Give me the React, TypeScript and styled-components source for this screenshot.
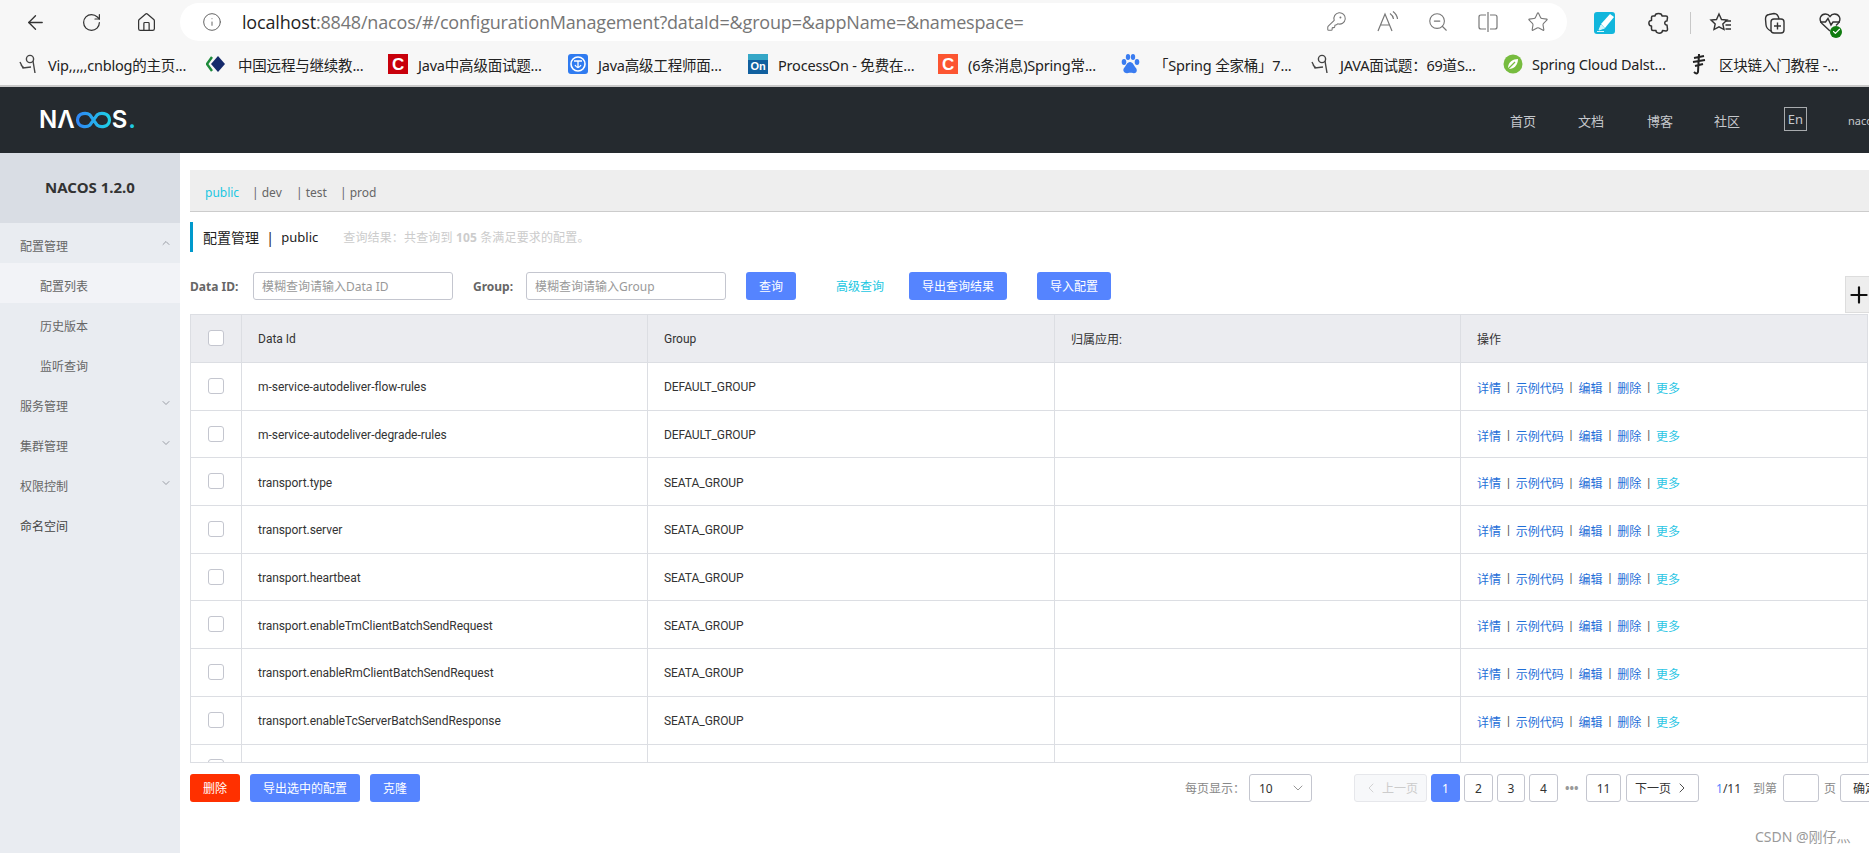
import styled, { createGlobalStyle } from "styled-components"
import {
  ArrowLeft,
  Check as CheckMark,
  ChevronDown,
  ChevronLeft,
  ChevronRight,
  ChevronUp,
  Home,
  Info,
  KeyRound,
  Plus,
  RotateCw,
  Star,
  ZoomOut,
} from "lucide-react"

const Global = createGlobalStyle`
  html, body {
    margin: 0;
    padding: 0;
    background: #fff;
  }
  * {
    box-sizing: border-box;
  }
`

const FONT = `"Noto Sans", "Noto Sans CJK SC", sans-serif`
const TABLE_FONT = `Roboto, "Noto Sans CJK SC", sans-serif`

const Page = styled.div`
  position: relative;
  width: 1869px;
  height: 853px;
  overflow: hidden;
  display: flex;
  flex-direction: column;
  font-family: ${FONT};
  font-size: 12px;
  color: #333;
`

/* browser chrome */
const Toolbar = styled.div`
  height: 44px;
  background: #f7f7f7;
  display: flex;
  align-items: center;
  padding-top: 1px;
`

const NavIcons = styled.div`
  width: 180px;
  padding-left: 24px;
  display: flex;
  align-items: center;
  gap: 34px;
  color: #333;
`

const AddressBar = styled.div`
  width: 1387px;
  height: 38px;
  margin-top: -2px;
  background: #fff;
  border-radius: 19px;
  display: flex;
  align-items: center;
  padding-left: 22px;
`

const Url = styled.div`
  margin-left: 20px;
  width: 880px;
  font-family: "Open Sans", sans-serif;
  font-size: 18px;
  letter-spacing: -0.17px;
  color: #767676;
  white-space: nowrap;
  b {
    font-weight: 400;
    color: #1f1f1f;
  }
`

const BarIcons = styled.div`
  margin-left: 204px;
  display: flex;
  align-items: center;
  gap: 28px;
  color: #777;
`

const ExtIcons = styled.div`
  margin-left: 13px;
  display: flex;
  align-items: center;
  color: #333;
`

const ExtSlot = styled.div<{ $w: number }>`
  position: relative;
  width: ${(p) => p.$w}px;
  display: flex;
  align-items: center;
  justify-content: center;
`

const Divider = styled.div`
  width: 1px;
  height: 22px;
  background: #c8c8c8;
`

const ExtBadge = styled.span`
  position: absolute;
  left: 31px;
  bottom: -3px;
  width: 12px;
  height: 12px;
  border-radius: 50%;
  background: #107c10;
  color: #fff;
  display: flex;
  align-items: center;
  justify-content: center;
`

const Bookmarks = styled.div`
  height: 43px;
  background: #f7f7f7;
  border-bottom: 2px solid #c9c9c9;
  display: flex;
  align-items: center;
  padding-left: 19px;
  padding-bottom: 1px;
`

const Bookmark = styled.div<{ $w: number; $gap: number }>`
  width: ${(p) => p.$w}px;
  flex-shrink: 0;
  display: flex;
  align-items: center;
  gap: ${(p) => p.$gap}px;
  font-size: 14.5px;
  letter-spacing: -0.2px;
  color: #222;
  white-space: nowrap;
`

const FavBadge = styled.span<{ $bg: string }>`
  width: 20px;
  height: 20px;
  flex-shrink: 0;
  display: flex;
  align-items: center;
  justify-content: center;
  background: ${(p) => p.$bg};
  color: #fff;
  font-family: "Liberation Sans", sans-serif;
  font-weight: 700;
  font-size: 17px;
  line-height: 1;
`

const OnBadge = styled(FavBadge)`
  font-size: 11px;
  background: linear-gradient(#35a7c7 0 30%, #11609f 30%);
  padding-top: 4px;
`

/* nacos header */
const Header = styled.header`
  height: 66px;
  background: #252a2f;
  display: flex;
  align-items: center;
`

const Logo = styled.div`
  margin-left: 39px;
  display: flex;
  align-items: center;
  color: #fff;
  font-family: Inter, sans-serif;
  font-weight: 600;
  font-size: 24px;
  line-height: 1;
  span {
    color: #1fc9e0;
    margin-left: 1px;
  }
`

const HeaderNav = styled.nav`
  margin-left: auto;
  display: flex;
  align-items: center;
  flex-shrink: 0;
  width: 359px;
  color: #c5c8cc;
  font-size: 13px;
`

const HeaderLink = styled.a<{ $w: number }>`
  width: ${(p) => p.$w}px;
  flex-shrink: 0;
`

const LangBox = styled.div`
  width: 23px;
  height: 24px;
  margin-top: -2px;
  border: 1px solid #a8abae;
  display: flex;
  align-items: center;
  justify-content: center;
  font-size: 13px;
  margin-right: 41px;
  flex-shrink: 0;
`

const UserName = styled.span`
  font-size: 11px;
  flex-shrink: 0;
`

/* body */
const Body = styled.div`
  flex: 1;
  min-height: 0;
  display: flex;
`

const Sidebar = styled.aside`
  width: 180px;
  flex-shrink: 0;
  background: #e9ecf1;
`

const SideTitle = styled.div`
  height: 70px;
  background: #d9dde4;
  display: flex;
  align-items: center;
  justify-content: center;
  font-weight: 700;
  font-size: 15px;
  color: #333;
  padding-bottom: 2px;
`

const MenuItem = styled.div<{ $sub?: boolean; $active?: boolean; $dark?: boolean }>`
  height: 40px;
  display: flex;
  align-items: center;
  justify-content: space-between;
  padding: 5px 8px 0 ${(p) => (p.$sub ? 40 : 20)}px;
  background: ${(p) => (p.$active ? "#f2f3f7" : "transparent")};
  color: ${(p) => (p.$dark ? "#444" : "#666")};
  font-size: 12px;
  svg {
    color: #9a9ea6;
    margin-top: -6px;
  }
`

const Main = styled.main`
  flex: 1;
  min-width: 0;
  padding: 17px 0 0 10px;
`

const Tabs = styled.div`
  height: 42px;
  background: #eee;
  border-bottom: 1px solid #ccc;
  display: flex;
  align-items: center;
  padding: 4px 0 0 15px;
  font-size: 12px;
  color: #666;
`

const Tab = styled.span<{ $w: number; $on?: boolean }>`
  width: ${(p) => p.$w}px;
  color: ${(p) => (p.$on ? "#1ac7e2" : "#666")};
`

const TitleRow = styled.div`
  height: 30px;
  margin-top: 10px;
  border-left: 3px solid #09c;
  padding-left: 10px;
  display: flex;
  align-items: center;
  font-size: 14px;
  color: #222;
  white-space: nowrap;
`

const TitleScope = styled.span`
  font-size: 13px;
`

const TitleHint = styled.span`
  margin-left: 25px;
  font-size: 12px;
  letter-spacing: 0.15px;
  color: #ccc;
  b {
    font-weight: 700;
  }
`

const SearchRow = styled.div`
  height: 28px;
  margin-top: 20px;
  display: flex;
  align-items: center;
  white-space: nowrap;
`

const FieldLabel = styled.label<{ $w: number }>`
  width: ${(p) => p.$w}px;
  font-weight: 700;
  font-size: 12px;
  color: #666;
`

const TextInput = styled.input<{ $w: number; $mr: number }>`
  width: ${(p) => p.$w}px;
  height: 28px;
  margin-right: ${(p) => p.$mr}px;
  padding: 0 8px;
  border: 1px solid #c4c6cf;
  border-radius: 3px;
  outline: none;
  background: #fff;
  font-family: ${FONT};
  font-size: 12px;
  &::placeholder {
    color: #999;
    opacity: 1;
  }
`

const Button = styled.button<{ $w: number; $bg?: string; $mr?: number }>`
  width: ${(p) => p.$w}px;
  height: 28px;
  margin-right: ${(p) => p.$mr ?? 0}px;
  padding: 0;
  border: none;
  border-radius: 3px;
  background: ${(p) => p.$bg ?? "#5584ff"};
  color: #fff;
  font-family: ${FONT};
  font-size: 12px;
  flex-shrink: 0;
`

const AdvancedLink = styled.a`
  width: 113px;
  padding-left: 40px;
  font-size: 12px;
  color: #1ac7e2;
  flex-shrink: 0;
`

const PlusTab = styled.div`
  position: absolute;
  left: 1845px;
  top: 276px;
  width: 30px;
  height: 37px;
  background: #eee;
  border: 1px solid #ddd;
  color: #111;
  display: flex;
  align-items: center;
`

const TableWrap = styled.div`
  height: 449px;
  margin-top: 14px;
  margin-right: 1px;
  overflow: hidden;
  border-bottom: 1px solid #dcdee3;
`

const Grid = styled.div`
  display: grid;
  grid-template-columns: 51px 406px 407px 406px 407px;
  border-left: 1px solid #dcdee3;
`

const HeadCell = styled.div`
  height: 49px;
  background: #ebecf0;
  border-top: 1px solid #dcdee3;
  border-bottom: 1px solid #dcdee3;
  border-right: 1px solid #dcdee3;
  display: flex;
  align-items: center;
  padding-left: 16px;
  color: #333;
  font-family: ${TABLE_FONT};
  font-size: 12px;
`

const Cell = styled.div`
  height: 47.7px;
  border-bottom: 1px solid #dcdee3;
  border-right: 1px solid #dcdee3;
  display: flex;
  align-items: center;
  padding: 2px 0 0 16px;
  color: #333;
  font-family: ${TABLE_FONT};
  font-size: 12px;
  letter-spacing: -0.05px;
  white-space: nowrap;
`

const CheckCell = styled(Cell)`
  padding: 0 0 1px 17px;
`

const CheckHead = styled(HeadCell)`
  padding: 0 0 2px 17px;
`

const Check = styled.span`
  width: 16px;
  height: 16px;
  background: #fff;
  border: 1px solid #c4c6cf;
  border-radius: 3px;
`

const OpLink = styled.a<{ $more?: boolean }>`
  color: ${(p) => (p.$more ? "#2cc6e4" : "#1f6fd8")};
`

const OpSep = styled.span`
  margin: 0 6px;
  color: #555;
`

const Footer = styled.div`
  margin-top: 11px;
  display: flex;
  align-items: center;
  white-space: nowrap;
`

const Pager = styled.div`
  margin-left: 765px;
  display: flex;
  align-items: center;
  flex-shrink: 0;
  color: #666;
`

const PageSizeLabel = styled.span`
  width: 64px;
  color: #888;
`

const Select = styled.div`
  width: 63px;
  height: 28px;
  margin-right: 42px;
  padding: 0 5px 0 9px;
  border: 1px solid #c4c6cf;
  border-radius: 3px;
  display: flex;
  align-items: center;
  justify-content: space-between;
  color: #333;
  svg {
    color: #888;
  }
`

const PageBtn = styled.div<{ $w: number; $mr?: number; $on?: boolean; $off?: boolean }>`
  width: ${(p) => p.$w}px;
  height: 28px;
  margin-right: ${(p) => p.$mr ?? 4}px;
  flex-shrink: 0;
  display: flex;
  align-items: center;
  justify-content: center;
  gap: 3px;
  border-radius: 3px;
  border: 1px solid ${(p) => (p.$on ? "#5584ff" : p.$off ? "#e6e7eb" : "#c4c6cf")};
  background: ${(p) => (p.$on ? "#5584ff" : p.$off ? "#f7f8fa" : "#fff")};
  color: ${(p) => (p.$on ? "#fff" : p.$off ? "#ccc" : "#333")};
`

const Ellipsis = styled.span`
  width: 28px;
  padding-left: 7px;
  color: #999;
  font-weight: 700;
`

const PageInfo = styled.span`
  width: 37px;
  margin-left: 13px;
  color: #333;
  i {
    font-style: normal;
    color: #5584ff;
  }
`

const JumpLabel = styled.span<{ $w: number }>`
  width: ${(p) => p.$w}px;
  color: #888;
  flex-shrink: 0;
`

const JumpBox = styled.div`
  width: 36px;
  height: 28px;
  margin-right: 5px;
  border: 1px solid #c4c6cf;
  border-radius: 3px;
  flex-shrink: 0;
`

const Watermark = styled.div`
  position: absolute;
  left: 1755px;
  top: 826px;
  font-size: 14px;
  color: #9a9a9a;
`

const bookmarkData: { w: number; gap: number; icon: string; text: string }[] = [
  { w: 187, gap: 11, icon: "figure", text: "Vip,,,,,cnblog的主页..." },
  { w: 182, gap: 12, icon: "diamond", text: "中国远程与继续教..." },
  { w: 180, gap: 10, icon: "red", text: "Java中高级面试题..." },
  { w: 180, gap: 10, icon: "globe", text: "Java高级工程师面..." },
  { w: 190, gap: 10, icon: "on", text: "ProcessOn - 免费在..." },
  { w: 182, gap: 10, icon: "orange", text: "(6条消息)Spring常..." },
  { w: 191, gap: 14, icon: "paw", text: "「Spring 全家桶」7..." },
  { w: 192, gap: 11, icon: "figure", text: "JAVA面试题：69道S..." },
  { w: 186, gap: 9, icon: "leaf", text: "Spring Cloud Dalst..." },
  { w: 180, gap: 10, icon: "ink", text: "区块链入门教程 -..." },
]

const rows: [string, string][] = [
  ["m-service-autodeliver-flow-rules", "DEFAULT_GROUP"],
  ["m-service-autodeliver-degrade-rules", "DEFAULT_GROUP"],
  ["transport.type", "SEATA_GROUP"],
  ["transport.server", "SEATA_GROUP"],
  ["transport.heartbeat", "SEATA_GROUP"],
  ["transport.enableTmClientBatchSendRequest", "SEATA_GROUP"],
  ["transport.enableRmClientBatchSendRequest", "SEATA_GROUP"],
  ["transport.enableTcServerBatchSendResponse", "SEATA_GROUP"],
  ["", ""],
]

function FavIcon({ kind }: { kind: string }) {
  if (kind === "red") return <FavBadge $bg="#c8000b">C</FavBadge>
  if (kind === "orange") return <FavBadge $bg="#fc5531">C</FavBadge>
  if (kind === "on") return <OnBadge $bg="#11609f">On</OnBadge>
  if (kind === "diamond")
    return (
      <svg width="20" height="20" viewBox="0 0 20 20">
        <path d="M6 3 L1 10 L6 17" fill="none" stroke="#1d8a3a" strokeWidth="2.4" />
        <path d="M12 2 L19 10 L12 18 L5 10 Z" fill="#14296b" />
      </svg>
    )
  if (kind === "globe")
    return (
      <svg width="20" height="20" viewBox="0 0 20 20">
        <rect width="20" height="20" rx="3" fill="#2f7bf0" />
        <circle cx="10" cy="10" r="7" fill="none" stroke="#fff" strokeWidth="1.6" />
        <path d="M6 7 H14 M10 7 V14 M7 11 Q10 16 13 11" fill="none" stroke="#fff" strokeWidth="1.3" />
      </svg>
    )
  if (kind === "paw")
    return (
      <svg width="20" height="22" viewBox="0 0 20 22">
        <ellipse cx="4" cy="9" rx="2.3" ry="3" fill="#3a7cf0" />
        <ellipse cx="8" cy="4" rx="2.2" ry="3" fill="#3a7cf0" />
        <ellipse cx="13" cy="4" rx="2.2" ry="3" fill="#3a7cf0" />
        <ellipse cx="17" cy="9" rx="2.3" ry="3" fill="#3a7cf0" />
        <path d="M10 9 C7 9 6 13 4 15 C2 18 5 21 8 20 C10 19.5 11 19.5 13 20 C16 21 18 18 16 15 C14 13 13 9 10 9 Z" fill="#3a7cf0" />
      </svg>
    )
  if (kind === "leaf")
    return (
      <svg width="20" height="20" viewBox="0 0 20 20">
        <circle cx="10" cy="10" r="9.5" fill="#77bc3f" />
        <path d="M5 14 C5 8 10 5 15 5 C15 11 11 15 6 15 Z" fill="#fff" />
        <path d="M5 15 L12 8" stroke="#77bc3f" strokeWidth="1.2" />
      </svg>
    )
  if (kind === "ink")
    return (
      <svg width="20" height="24" viewBox="0 0 20 24">
        <path d="M5 6 L15 4 M4 10 L16 8 M6 14 L14 12 M10 2 L9 20 Q8 23 5 20" fill="none" stroke="#222" strokeWidth="2" />
      </svg>
    )
  return (
    <svg width="18" height="22" viewBox="0 0 18 22">
      <circle cx="11" cy="6" r="3.6" fill="none" stroke="#444" strokeWidth="1.4" />
      <path d="M1 9 L4 15 L12 14 M14 8 L16 20 M5 15 L2 12" fill="none" stroke="#444" strokeWidth="1.4" />
    </svg>
  )
}

function InfinityMark() {
  return (
    <svg width="37" height="18" viewBox="0 0 37 18">
      <defs>
        <linearGradient id="nacosLoop" x1="0" x2="1" y1="0" y2="0">
          <stop offset="0" stopColor="#2f86f6" />
          <stop offset="1" stopColor="#1fd0e6" />
        </linearGradient>
      </defs>
      <path
        d="M15 4 C12 1.5 3 1 2.5 9 C3 17 12 16.5 15 14 L22 4 C25 1.5 34 1 34.5 9 C34 17 25 16.5 22 14 Z"
        fill="none"
        stroke="url(#nacosLoop)"
        strokeWidth="3.2"
      />
    </svg>
  )
}

function ReadAloudIcon() {
  return (
    <svg width="24" height="24" viewBox="0 0 24 24" fill="none" stroke="currentColor" strokeWidth="1.2">
      <path d="M3 21 L10 4 L17 21 M5.5 15 H14.5" />
      <path d="M15 3.5 Q18 5.5 18.5 9 M18 1.5 Q22 4.5 22.5 9" />
    </svg>
  )
}

function SplitIcon() {
  return (
    <svg width="22" height="24" viewBox="0 0 22 24" fill="none" stroke="currentColor" strokeWidth="1.2">
      <path d="M9 5 H4 Q2 5 2 7 V17 Q2 19 4 19 H9 M13 5 H18 Q20 5 20 7 V17 Q20 19 18 19 H13" />
      <path d="M11 2 V22" />
    </svg>
  )
}

function PenIcon() {
  return (
    <svg width="21" height="22" viewBox="0 0 21 22">
      <rect width="21" height="22" rx="3" fill="#12b6dc" />
      <path d="M7 12 L16 2 L20 5 L11 16 Z" fill="#fff" />
      <path d="M5 18 L7 13 L10.5 16 Z M3 19.5 H10" fill="#d8f6fb" stroke="#d8f6fb" />
    </svg>
  )
}

function ExtensionIcon() {
  return (
    <svg width="24" height="24" viewBox="0 0 24 24" fill="none" stroke="currentColor" strokeWidth="1.5" strokeLinejoin="round">
      <path d="M8 5 C8 1.5 15 1.5 15 5 L19 5 Q20.5 5 20.5 6.5 L20 10 C17 9.5 17 14.5 20 14 L20.5 18 Q20.5 20 19 20 L15.5 19.5 C15.5 23 8.5 23 9 19.5 L6 19.5 Q4.5 19.5 4.5 18 L4.5 15 C1 15 1 9 4.5 9.5 L4.5 6.5 Q4.5 5 6 5 Z" />
    </svg>
  )
}

function FavoritesIcon() {
  return (
    <svg width="24" height="24" viewBox="0 0 24 24" fill="none" stroke="currentColor" strokeWidth="1.4">
      <path d="M10 3 L12.5 8.5 L18 9 L13.8 13 L15 18.5 L10 15.8 L5 18.5 L6.2 13 L2 9 L7.5 8.5 Z" />
      <path d="M16 10 H22 M16.5 14 H22 M16.5 18 H22" />
    </svg>
  )
}

function CollectionsIcon() {
  return (
    <svg width="24" height="24" viewBox="0 0 24 24" fill="none" stroke="currentColor" strokeWidth="1.4">
      <rect x="8" y="8" width="13" height="14" rx="3" />
      <path d="M14.5 11.5 V18.5 M11 15 H18" />
      <path d="M8 20 Q3.5 18 3 14 L2.5 8 Q2.5 4 6 3.5 L11 2.5 Q15 2.5 16 8" />
    </svg>
  )
}

function HealthIcon() {
  return (
    <svg width="24" height="24" viewBox="0 0 24 24" fill="none" stroke="currentColor" strokeWidth="1.4">
      <path d="M12 20 L4 12.5 C0 8 3 3 7.5 3 C9.5 3 11 4 12 5.5 C13 4 14.5 3 16.5 3 C21 3 24 8 20 12.5 L18 14.5" />
      <path d="M2 11 H7.5 L10 7.5 L13 14 L15 11 H22" />
    </svg>
  )
}

function RowCells({ id, group }: { id: string; group: string }) {
  return (
    <>
      <CheckCell>
        <Check />
      </CheckCell>
      <Cell>{id}</Cell>
      <Cell>{group}</Cell>
      <Cell />
      <Cell>
        <OpLink>详情</OpLink>
        <OpSep>|</OpSep>
        <OpLink>示例代码</OpLink>
        <OpSep>|</OpSep>
        <OpLink>编辑</OpLink>
        <OpSep>|</OpSep>
        <OpLink>删除</OpLink>
        <OpSep>|</OpSep>
        <OpLink $more>更多</OpLink>
      </Cell>
    </>
  )
}

export default function App() {
  return (
    <Page>
      <Global />
      <Toolbar>
        <NavIcons>
          <ArrowLeft size={23} strokeWidth={1.4} />
          <RotateCw size={21} strokeWidth={1.4} />
          <Home size={21} strokeWidth={1.4} />
        </NavIcons>
        <AddressBar>
          <Info size={20} strokeWidth={1.2} color="#666" />
          <Url>
            <b>localhost</b>:8848/nacos/#/configurationManagement?dataId=&amp;group=&amp;appName=&amp;namespace=
          </Url>
          <BarIcons>
            <KeyRound size={21} strokeWidth={1.2} />
            <ReadAloudIcon />
            <ZoomOut size={22} strokeWidth={1.2} />
            <SplitIcon />
            <Star size={22} strokeWidth={1.2} />
          </BarIcons>
        </AddressBar>
        <ExtIcons>
          <ExtSlot $w={48}>
            <PenIcon />
          </ExtSlot>
          <ExtSlot $w={62}>
            <ExtensionIcon />
          </ExtSlot>
          <Divider />
          <ExtSlot $w={60}>
            <FavoritesIcon />
          </ExtSlot>
          <ExtSlot $w={48}>
            <CollectionsIcon />
          </ExtSlot>
          <ExtSlot $w={62}>
            <HealthIcon />
            <ExtBadge>
              <CheckMark size={9} strokeWidth={3} />
            </ExtBadge>
          </ExtSlot>
        </ExtIcons>
      </Toolbar>
      <Bookmarks>
        {bookmarkData.map((b) => (
          <Bookmark key={b.text} $w={b.w} $gap={b.gap}>
            <FavIcon kind={b.icon} />
            {b.text}
          </Bookmark>
        ))}
      </Bookmarks>
      <Header>
        <Logo>
          NΛ
          <InfinityMark />
          S<span>.</span>
        </Logo>
        <HeaderNav>
          <HeaderLink $w={68}>首页</HeaderLink>
          <HeaderLink $w={69}>文档</HeaderLink>
          <HeaderLink $w={67}>博客</HeaderLink>
          <HeaderLink $w={70}>社区</HeaderLink>
          <LangBox>En</LangBox>
          <UserName>nacos</UserName>
        </HeaderNav>
      </Header>
      <Body>
        <Sidebar>
          <SideTitle>NACOS 1.2.0</SideTitle>
          <MenuItem>
            配置管理
            <ChevronUp size={12} />
          </MenuItem>
          <MenuItem $sub $active>
            配置列表
          </MenuItem>
          <MenuItem $sub>历史版本</MenuItem>
          <MenuItem $sub>监听查询</MenuItem>
          <MenuItem>
            服务管理
            <ChevronDown size={12} />
          </MenuItem>
          <MenuItem>
            集群管理
            <ChevronDown size={12} />
          </MenuItem>
          <MenuItem>
            权限控制
            <ChevronDown size={12} />
          </MenuItem>
          <MenuItem $dark>命名空间</MenuItem>
        </Sidebar>
        <Main>
          <Tabs>
            <Tab $w={47} $on>
              public
            </Tab>
            <Tab $w={44}>| dev</Tab>
            <Tab $w={44}>| test</Tab>
            <Tab $w={50}>| prod</Tab>
          </Tabs>
          <TitleRow>
            配置管理&nbsp;&nbsp;|&nbsp;&nbsp;<TitleScope>public</TitleScope>
            <TitleHint>
              查询结果：共查询到 <b>105</b> 条满足要求的配置。
            </TitleHint>
          </TitleRow>
          <SearchRow>
            <FieldLabel $w={63}>Data ID:</FieldLabel>
            <TextInput $w={200} $mr={20} placeholder="模糊查询请输入Data ID" />
            <FieldLabel $w={53}>Group:</FieldLabel>
            <TextInput $w={200} $mr={20} placeholder="模糊查询请输入Group" />
            <Button $w={50}>查询</Button>
            <AdvancedLink>高级查询</AdvancedLink>
            <Button $w={98} $mr={30}>
              导出查询结果
            </Button>
            <Button $w={74}>导入配置</Button>
          </SearchRow>
          <TableWrap>
            <Grid>
              <CheckHead>
                <Check />
              </CheckHead>
              <HeadCell>Data Id</HeadCell>
              <HeadCell>Group</HeadCell>
              <HeadCell>归属应用:</HeadCell>
              <HeadCell>操作</HeadCell>
              {rows.map(([id, group], i) => (
                <RowCells key={i} id={id} group={group} />
              ))}
            </Grid>
          </TableWrap>
          <Footer>
            <Button $w={50} $mr={10} $bg="#ff3000">
              删除
            </Button>
            <Button $w={110} $mr={10}>
              导出选中的配置
            </Button>
            <Button $w={50}>克隆</Button>
            <Pager>
              <PageSizeLabel>每页显示：</PageSizeLabel>
              <Select>
                10
                <ChevronDown size={16} strokeWidth={1.3} />
              </Select>
              <PageBtn $w={73} $off>
                <ChevronLeft size={16} strokeWidth={1.3} />
                上一页
              </PageBtn>
              <PageBtn $w={29} $on>
                1
              </PageBtn>
              <PageBtn $w={29}>2</PageBtn>
              <PageBtn $w={28}>3</PageBtn>
              <PageBtn $w={29} $mr={0}>
                4
              </PageBtn>
              <Ellipsis>•••</Ellipsis>
              <PageBtn $w={35} $mr={5}>
                11
              </PageBtn>
              <PageBtn $w={73} $mr={4}>
                下一页
                <ChevronRight size={16} strokeWidth={1.3} />
              </PageBtn>
              <PageInfo>
                <i>1</i>/11
              </PageInfo>
              <JumpLabel $w={30}>到第</JumpLabel>
              <JumpBox />
              <JumpLabel $w={16}>页</JumpLabel>
              <PageBtn $w={50}>确定</PageBtn>
            </Pager>
          </Footer>
        </Main>
      </Body>
      <PlusTab>
        <Plus size={26} strokeWidth={2} />
      </PlusTab>
      <Watermark>CSDN @刚仔灬</Watermark>
    </Page>
  )
}
